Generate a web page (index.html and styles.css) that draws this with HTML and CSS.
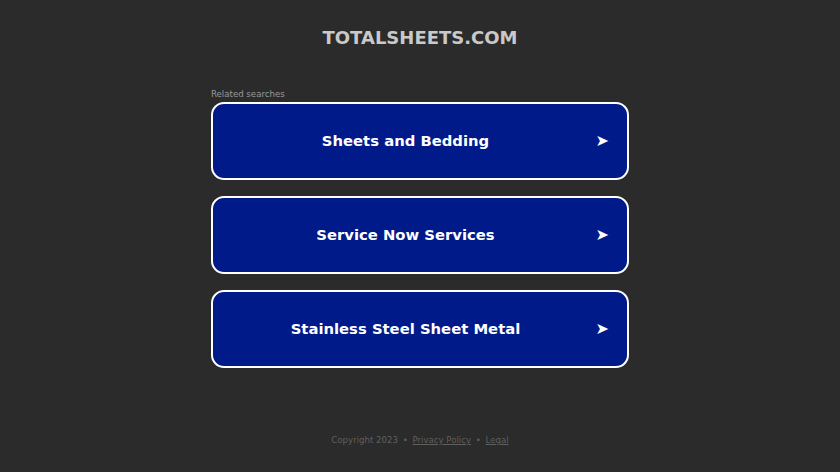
FILE: index.html
```html
<!DOCTYPE html>
<html>
<head>
<meta charset="utf-8">
<link rel="stylesheet" href="styles.css">
</head>
<body>
<div class="page">
  <h1 class="title">TOTALSHEETS.COM</h1>
  <div class="related">
    <div class="label">Related searches</div>
    <a class="item" href="#"><span class="text">Sheets and Bedding</span><span class="arrow">➤</span></a>
    <a class="item" href="#"><span class="text">Service Now Services</span><span class="arrow">➤</span></a>
    <a class="item" href="#"><span class="text">Stainless Steel Sheet Metal</span><span class="arrow">➤</span></a>
  </div>
  <div class="footer">Copyright 2023 <span class="dot">•</span> <a href="#">Privacy Policy</a> <span class="dot">•</span> <a href="#">Legal</a></div>
</div>
</body>
</html>
```
FILE: styles.css
```css
html, body {
  margin: 0;
  padding: 0;
  background: #2b2b2b;
  font-family: "DejaVu Sans", sans-serif;
}
.page {
  width: 840px;
  height: 472px;
  display: flex;
  flex-direction: column;
  align-items: center;
}
.title {
  margin: 27px 0 0 0;
  font-size: 18px;
  line-height: 22px;
  font-weight: bold;
  color: #c9c9c9;
}
.related {
  margin-top: 40px;
  width: 418px;
  display: flex;
  flex-direction: column;
}
.label {
  font-size: 8.6px;
  line-height: 11px;
  color: #999999;
  margin-bottom: 2px;
}
.item {
  box-sizing: border-box;
  height: 78px;
  margin-bottom: 16px;
  padding-right: 29px;
  padding-bottom: 2px;
  border: 2px solid #ffffff;
  border-radius: 13px;
  background: #011a8a;
  display: flex;
  align-items: center;
  justify-content: center;
  position: relative;
  text-decoration: none;
  color: #ffffff;
}
.text {
  font-size: 14.8px;
  font-weight: bold;
  color: #ffffff;
}
.arrow {
  position: absolute;
  right: 18px;
  top: 50%;
  transform: translateY(-50%);
  margin-top: -1px;
  font-size: 16px;
  color: #ffffff;
}
.footer {
  margin-top: 51px;
  font-size: 8.6px;
  color: #5f5f5f;
}
.footer a {
  color: #5f5f5f;
}
.dot {
  margin: 0 2px;
}
```
